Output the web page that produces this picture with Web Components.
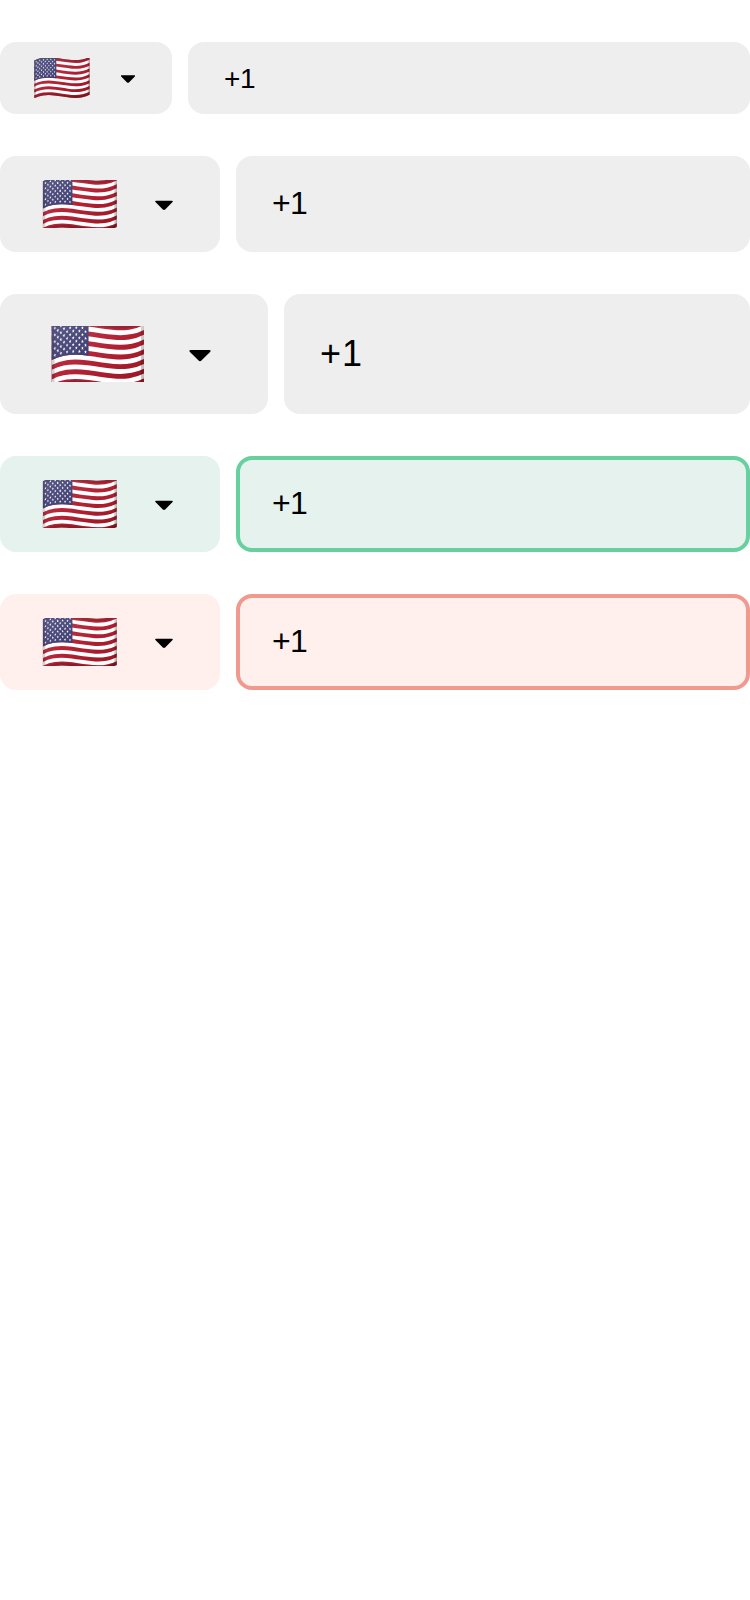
<!DOCTYPE html>
<html lang="en"><head><meta charset="utf-8"><title>Phone input</title>
<style>body{margin:0;min-height:1600px;background:#fff;font-family:"Liberation Sans",Arial,sans-serif;color:#000}</style></head>
<body>
<phone-list>
<phone-input size="compact"></phone-input>
<phone-input></phone-input>
<phone-input size="large"></phone-input>
<phone-input state="positive"></phone-input>
<phone-input state="error"></phone-input>
</phone-list>
<script>
class PhoneList extends HTMLElement{
  constructor(){super();this.attachShadow({mode:'open'}).innerHTML=`
<style>
/* Laid out on a 375px mobile grid, shown at double size */
:host{box-sizing:border-box;display:flex;flex-direction:column;gap:21px;padding-top:21px;width:375px;height:800px;transform:scale(2);transform-origin:0 0}
</style><slot></slot>`;}
}
class CountryFlag extends HTMLElement{
  constructor(){super();this.attachShadow({mode:'open'}).innerHTML=`
<style>:host{display:block;height:var(--flag-h);line-height:var(--flag-h);font-size:var(--flag-size);clip-path:inset(0);white-space:nowrap;flex:none}</style><span>🇺🇸</span>`;}
}
class CaretDown extends HTMLElement{
  constructor(){super();this.attachShadow({mode:'open'}).innerHTML=`
<style>:host{display:block;width:var(--caret);height:var(--caret);margin-left:auto;flex:none}svg{display:block;width:100%;height:100%}</style>
<svg viewBox="0 0 24 24" fill="#000"><path d="M12.7071 15.2929L17.1464 10.8536C17.4614 10.5386 17.2383 10 16.7929 10L7.20711 10C6.76165 10 6.53857 10.5386 6.85355 10.8536L11.2929 15.2929C11.6834 15.6834 12.3166 15.6834 12.7071 15.2929Z"/></svg>`;}
}
class PhoneInput extends HTMLElement{
  constructor(){super();this.attachShadow({mode:'open'}).innerHTML=`
<style>
:host{--h:48px;--w:110px;--flag-h:24px;--flag-size:32px;--fs:16px;--lh:24px;--ls:-.34px;--pad:20px;--caret:20px;--end:18px;--bg:#eee;--line:#eee;
display:flex;flex:none;gap:8px;height:var(--h)}
:host([size=compact]){--h:36px;--w:86px;--flag-h:20px;--flag-size:24px;--fs:14px;--lh:20px;--ls:-.18px;--pad:16px;--caret:16px;--end:14px}
:host([size=large]){--h:60px;--w:134px;--flag-h:28px;--flag-size:40px;--fs:18px;--lh:28px;--ls:.49px;--pad:24px;--caret:24px;--end:22px}
:host([state=positive]){--bg:#e6f2ed;--line:#66d19e}
:host([state=error]){--bg:#ffefed;--line:#f1998e}
.country,.number{box-sizing:border-box;border-radius:8px;background:var(--bg);display:flex;align-items:center}
.country{width:var(--w);padding:0 var(--end) 0 var(--pad);flex:none}
.number{flex:1;border:2px solid var(--line);padding:0 16px;font-size:var(--fs);line-height:var(--lh);letter-spacing:var(--ls)}
</style>
<div class="country"><country-flag></country-flag><caret-down></caret-down></div>
<div class="number"><span>+1</span></div>`;}
}
customElements.define('country-flag',CountryFlag);
customElements.define('caret-down',CaretDown);
customElements.define('phone-input',PhoneInput);
customElements.define('phone-list',PhoneList);
</script></body></html>
